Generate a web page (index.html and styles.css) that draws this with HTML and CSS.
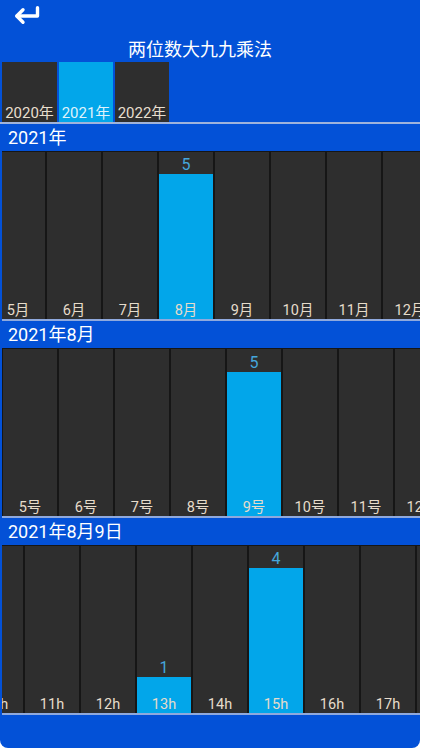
FILE: index.html
```html
<!DOCTYPE html>
<html lang="zh">
<head>
<meta charset="utf-8">
<title>两位数大九九乘法</title>
<link rel="stylesheet" href="styles.css">
</head>
<body>
<div class="app">
  <header class="topbar">
    <svg class="back" width="28" height="20" viewBox="0 0 28 20">
      <path d="M23.5 1.8 V10 H3" fill="none" stroke="#fff" stroke-width="3.4" stroke-linecap="round" stroke-linejoin="round"/>
      <path d="M9 3.8 L2.8 10 L9 16.2" fill="none" stroke="#fff" stroke-width="3.4" stroke-linecap="round" stroke-linejoin="round"/>
    </svg>
    <h1 class="title">两位数大九九乘法</h1>
  </header>

  <div class="years">
    <div class="year">2020年</div>
    <div class="year active">2021年</div>
    <div class="year">2022年</div>
  </div>

  <section class="section">
    <div class="sec-head">2021年</div>
    <div class="chart">
      <div class="track off-month">
        <div class="col"><span class="lbl">5月</span></div>
        <div class="col"><span class="lbl">6月</span></div>
        <div class="col"><span class="lbl">7月</span></div>
        <div class="col"><div class="barwrap"><span class="val">5</span><div class="bar" style="height:145px"></div></div><span class="lbl">8月</span></div>
        <div class="col"><span class="lbl">9月</span></div>
        <div class="col"><span class="lbl">10月</span></div>
        <div class="col"><span class="lbl">11月</span></div>
        <div class="col"><span class="lbl">12月</span></div>
      </div>
    </div>
  </section>

  <section class="section">
    <div class="sec-head">2021年8月</div>
    <div class="chart">
      <div class="track off-day">
        <div class="col"><span class="lbl">5号</span></div>
        <div class="col"><span class="lbl">6号</span></div>
        <div class="col"><span class="lbl">7号</span></div>
        <div class="col"><span class="lbl">8号</span></div>
        <div class="col"><div class="barwrap"><span class="val">5</span><div class="bar" style="height:144px"></div></div><span class="lbl">9号</span></div>
        <div class="col"><span class="lbl">10号</span></div>
        <div class="col"><span class="lbl">11号</span></div>
        <div class="col"><span class="lbl">12号</span></div>
      </div>
    </div>
  </section>

  <section class="section">
    <div class="sec-head">2021年8月9日</div>
    <div class="chart">
      <div class="track off-hour">
        <div class="col"><span class="lbl">10h</span></div>
        <div class="col"><span class="lbl">11h</span></div>
        <div class="col"><span class="lbl">12h</span></div>
        <div class="col"><div class="barwrap"><span class="val">1</span><div class="bar" style="height:36px"></div></div><span class="lbl">13h</span></div>
        <div class="col"><span class="lbl">14h</span></div>
        <div class="col"><div class="barwrap"><span class="val">4</span><div class="bar" style="height:145px"></div></div><span class="lbl">15h</span></div>
        <div class="col"><span class="lbl">16h</span></div>
        <div class="col"><span class="lbl">17h</span></div>
        <div class="col"><span class="lbl">18h</span></div>
      </div>
    </div>
  </section>
</div>
</body>
</html>
```

FILE: styles.css
```css
* { box-sizing: border-box; }
html, body { margin: 0; padding: 0; background: #ffffff; }
body {
  font-family: Roboto, "Noto Sans CJK SC", sans-serif;
  width: 422px;
  height: 750px;
  overflow: hidden;
}
.app {
  width: 420px;
  height: 748px;
  background: #0351d7;
  border-radius: 0 0 8px 8px;
  overflow: hidden;
}
.topbar {
  padding: 6px 0 0 14px;
  height: 62px;
}
.back { display: block; }
.title {
  margin: 10px 0 0 -14px;
  padding-right: 20px;
  font-family: "Noto Sans CJK SC", sans-serif;
  font-weight: 400;
  font-size: 18px;
  line-height: 24px;
  color: #ffffff;
  text-align: center;
}
.years {
  display: flex;
  gap: 2px;
  height: 62px;
  padding-left: 2px;
  border-bottom: 2px solid #9fb3dc;
}
.year {
  width: 55px;
  background: #2e2e2e;
  color: #e8dfcf;
  font-size: 15px;
  line-height: 17px;
  text-align: center;
  display: flex;
  align-items: flex-end;
  justify-content: center;
}
.year + .year { width: 54px; }
.year.active { background: #02a6ea; color: #dff2fb; }
.sec-head {
  height: 27px;
  padding: 1px 0 0 8px;
  color: #ffffff;
  font-size: 18px;
  line-height: 26px;
}
.chart {
  margin-left: 2px;
  height: 170px;
  overflow: hidden;
  border-bottom: 2px solid #8fa9dd;
  background: #161616;
}
.track {
  display: flex;
  gap: 2px;
  height: 168px;
  padding-top: 1px;
}
.off-month { margin-left: -11px; }
.off-day { margin-left: 1px; }
.off-hour { margin-left: -33px; }
.col {
  flex: 0 0 54px;
  background: #2e2e2e;
  display: grid;
  grid-template: 1fr / 1fr;
}
.barwrap {
  grid-area: 1 / 1;
  align-self: end;
  display: flex;
  flex-direction: column;
  align-items: stretch;
}
.val {
  color: #45a6dc;
  font-size: 16px;
  line-height: 19px;
  text-align: center;
}
.bar {
  background: #02a6ea;
}
.lbl {
  grid-area: 1 / 1;
  align-self: end;
  text-align: center;
  color: #e6dccb;
  font-size: 14.5px;
  line-height: 17px;
  white-space: nowrap;
  overflow: hidden;
}
```
